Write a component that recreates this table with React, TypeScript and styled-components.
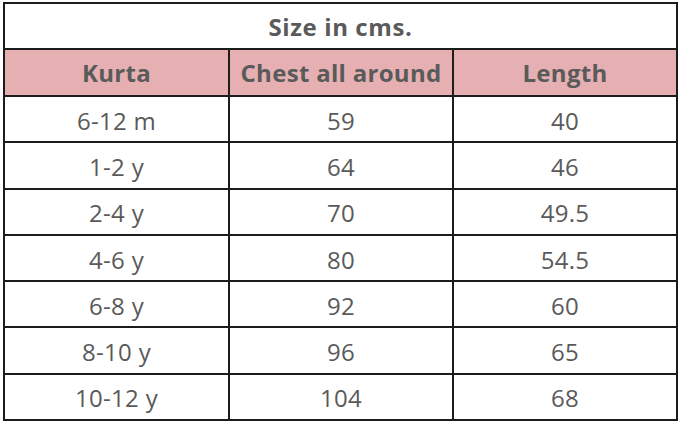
import React from "react";
import styled, { createGlobalStyle } from "styled-components";

const Global = createGlobalStyle`
  html, body { margin: 0; padding: 0; background: #ffffff; }
  body { font-family: "Open Sans", "Liberation Sans", sans-serif; }
`;

const Page = styled.div`
  width: 679px;
  height: 423px;
  padding: 2px 0 0 3px;
  box-sizing: border-box;
  background: #ffffff;
`;

const Table = styled.div`
  width: 675px;
  display: grid;
  grid-template-columns: 225px 224px 224px;
  grid-template-rows: 46px 47px repeat(7, 46.3px);
  border-left: 2px solid #1c1c1c;
  border-top: 2px solid #1c1c1c;
  box-sizing: border-box;
`;

const Cell = styled.div<{ $head?: boolean; $span?: number }>`
  grid-column: span ${(p) => p.$span ?? 1};
  display: flex;
  align-items: center;
  justify-content: center;
  border-right: 2px solid #1c1c1c;
  border-bottom: 2px solid #1c1c1c;
  background: ${(p) => (p.$head ? "#E6B0B2" : "#ffffff")};
  color: #5a5a5a;
  font-size: 24px;
  letter-spacing: 0.3px;
  font-weight: ${(p) => (p.$head ? 700 : 400)};
  padding-top: ${(p) => (p.$head ? 0 : 2)}px;
  box-sizing: border-box;
  white-space: nowrap;
`;

const Title = styled(Cell)`
  font-weight: 700;
  background: #ffffff;
  letter-spacing: 0.6px;
  padding-top: 1px;
`;

const rows: [string, string, string][] = [
  ["6-12 m", "59", "40"],
  ["1-2 y", "64", "46"],
  ["2-4 y", "70", "49.5"],
  ["4-6 y", "80", "54.5"],
  ["6-8 y", "92", "60"],
  ["8-10 y", "96", "65"],
  ["10-12 y", "104", "68"],
];

export default function App() {
  return (
    <>
      <Global />
      <Page>
        <Table>
          <Title $span={3}>Size in cms.</Title>
          <Cell $head>Kurta</Cell>
          <Cell $head>Chest all around</Cell>
          <Cell $head>Length</Cell>
          {rows.map((r) =>
            r.map((v, i) => <Cell key={r[0] + i}>{v}</Cell>)
          )}
        </Table>
      </Page>
    </>
  );
}
